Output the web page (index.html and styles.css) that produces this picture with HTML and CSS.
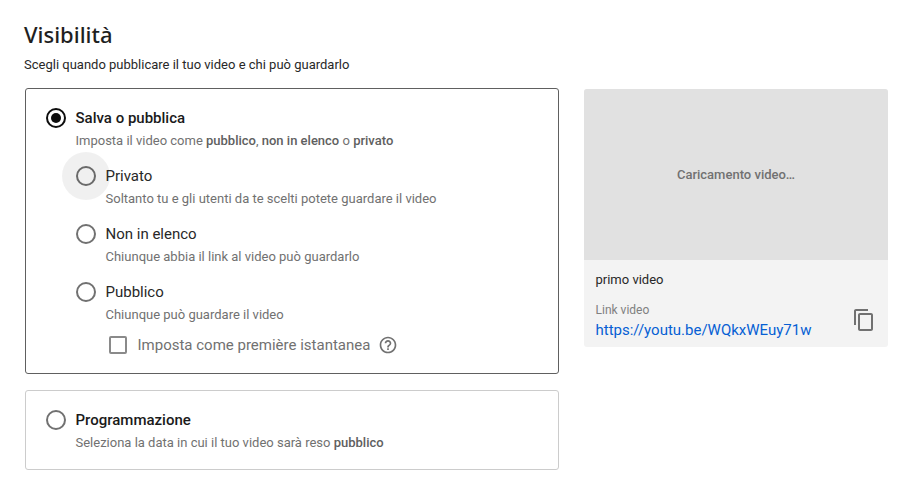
FILE: index.html
```html
<!DOCTYPE html>
<html lang="it">
<head>
<meta charset="utf-8">
<title>Visibilità</title>
<link rel="stylesheet" href="styles.css">
</head>
<body>
<main class="page">
  <h1 class="title">Visibilità</h1>
  <p class="subtitle">Scegli quando pubblicare il tuo video e chi può guardarlo</p>
  <div class="columns">
    <div class="left">
      <section class="box box-active">
        <div class="option">
          <span class="radio radio-on"></span>
          <div class="option-text">
            <div class="label label-strong">Salva o pubblica</div>
            <div class="desc">Imposta il video come <b>pubblico</b>, <b>non in elenco</b> o <b>privato</b></div>
          </div>
        </div>
        <div class="suboptions">
          <div class="option sub">
            <span class="radio radio-hover"></span>
            <div class="option-text">
              <div class="label">Privato</div>
              <div class="desc">Soltanto tu e gli utenti da te scelti potete guardare il video</div>
            </div>
          </div>
          <div class="option sub">
            <span class="radio"></span>
            <div class="option-text">
              <div class="label">Non in elenco</div>
              <div class="desc">Chiunque abbia il link al video può guardarlo</div>
            </div>
          </div>
          <div class="option sub">
            <span class="radio"></span>
            <div class="option-text">
              <div class="label">Pubblico</div>
              <div class="desc">Chiunque può guardare il video</div>
            </div>
          </div>
          <div class="premiere">
            <span class="checkbox"></span>
            <span class="premiere-label">Imposta come première istantanea</span>
            <svg class="help" viewBox="0 0 24 24" width="20" height="20" aria-hidden="true"><path fill="#717171" d="M11 18h2v-2h-2v2zm1-16C6.48 2 2 6.48 2 12s4.48 10 10 10 10-4.48 10-10S17.52 2 12 2zm0 18c-4.41 0-8-3.59-8-8s3.59-8 8-8 8 3.59 8 8-3.59 8-8 8zm0-14c-2.21 0-4 1.79-4 4h2c0-1.1.9-2 2-2s2 .9 2 2c0 2-3 1.75-3 5h2c0-2.25 3-2.5 3-5 0-2.21-1.79-4-4-4z"/></svg>
          </div>
        </div>
      </section>
      <section class="box box-idle">
        <div class="option">
          <span class="radio"></span>
          <div class="option-text">
            <div class="label label-strong">Programmazione</div>
            <div class="desc">Seleziona la data in cui il tuo video sarà reso <b>pubblico</b></div>
          </div>
        </div>
      </section>
    </div>
    <aside class="card">
      <div class="thumb">Caricamento video…</div>
      <div class="card-body">
        <div class="video-name">primo video</div>
        <div class="link-row">
          <div>
            <div class="link-label">Link video</div>
            <a class="link" href="#">https://youtu.be/WQkxWEuy71w</a>
          </div>
          <svg class="copy" viewBox="0 0 24 24" width="24" height="24" aria-hidden="true"><path fill="#717171" d="M16 1H4c-1.1 0-2 .9-2 2v14h2V3h12V1zm3 4H8c-1.1 0-2 .9-2 2v14c0 1.1.9 2 2 2h11c1.1 0 2-.9 2-2V7c0-1.1-.9-2-2-2zm0 16H8V7h11v14z"/></svg>
        </div>
      </div>
    </aside>
  </div>
</main>
</body>
</html>
```
FILE: styles.css
```css
* { box-sizing: border-box; }
html, body { margin: 0; padding: 0; background: #fff; }
body {
  width: 910px;
  height: 478px;
  overflow: hidden;
  font-family: Roboto, "Liberation Sans", sans-serif;
  color: #0d0d0d;
}
.page { padding: 19px 22px 0 24px; }
.title {
  margin: 0;
  font-family: "Noto Sans", sans-serif;
  font-size: 22px;
  font-weight: 500;
  line-height: 30px;
  color: #1f1f1f;
}
.subtitle {
  margin: 7px 0 0;
  font-size: 13px;
  line-height: 18px;
  color: #282828;
}
.columns { display: flex; gap: 25px; margin-top: 14px; padding-left: 1px; }
.left { width: 534px; display: flex; flex-direction: column; gap: 16px; }
.box { border-radius: 3px; background: #fff; }
.box-active { height: 286px; border: 1px solid #606060; padding: 19px 20px 0 20px; }
.box-idle { height: 80px; border: 1px solid #ccc; padding: 19px 20px 0 20px; }
.option { display: flex; align-items: flex-start; gap: 10px; }
.radio {
  position: relative;
  flex: none;
  width: 20px;
  height: 20px;
  border: 2px solid #717171;
  border-radius: 50%;
}
.radio-on { border-color: #0d0d0d; }
.radio-on::after {
  content: "";
  position: absolute;
  inset: 3px;
  border-radius: 50%;
  background: #0d0d0d;
}
.radio-hover::before {
  content: "";
  position: absolute;
  left: -16px;
  top: -16px;
  width: 48px;
  height: 48px;
  border-radius: 50%;
  background: rgba(0, 0, 0, 0.06);
}
.option-text { position: relative; margin-left: -0.5px; }
.label { font-size: 15px; line-height: 20px; color: #282828; }
.label-strong { font-weight: 500; color: #1a1a1a; }
.desc { margin-top: 4px; font-size: 13px; line-height: 18px; color: #717171; }
.desc b { font-weight: 500; color: #606060; }
.suboptions { padding-left: 30px; }
.sub { margin-top: 16px; }
.premiere { display: flex; align-items: center; margin-top: 11px; padding-left: 33px; height: 20px; }
.checkbox { flex: none; width: 18px; height: 18px; border: 2px solid #8a8a8a; border-radius: 2px; }
.premiere-label { margin-left: 10.5px; font-size: 15px; color: #717171; }
.help { margin-left: 8px; }
.card {
  width: 304px;
  height: 258px;
  margin-top: 1px;
  border-radius: 3px;
  overflow: hidden;
  background: #f3f3f3;
}
.thumb {
  height: 171px;
  display: flex;
  align-items: center;
  justify-content: center;
  background: #e1e1e1;
  font-size: 13px;
  font-weight: 500;
  color: #717171;
}
.card-body { padding: 11px 12px 0 11.5px; }
.video-name { font-size: 13px; line-height: 18px; color: #282828; }
.link-row { display: flex; justify-content: space-between; align-items: center; margin-top: 14px; padding-right: 0.5px; }
.link-label { font-size: 12px; line-height: 15px; color: #808080; }
.link { display: block; margin-top: 2px; font-size: 15px; line-height: 20px; color: #065fd4; text-decoration: none; }
.copy { display: block; margin-top: -3px; }
```
